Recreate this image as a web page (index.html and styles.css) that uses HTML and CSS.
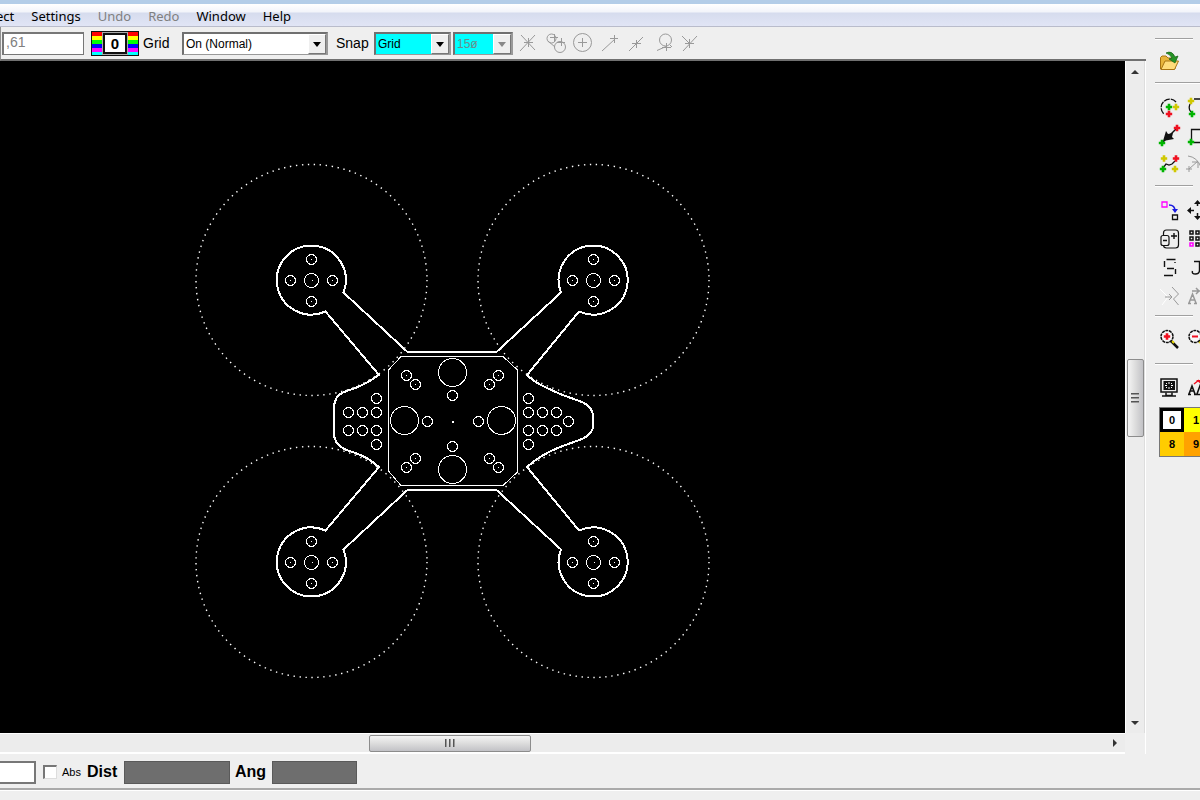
FILE: index.html
```html
<!DOCTYPE html>
<html lang="en">
<head>
<meta charset="utf-8">
<title>CAD drawing</title>
<link rel="stylesheet" href="styles.css">
</head>
<body>
<svg class="defs" aria-hidden="true">
  <defs>
    <path id="plus" d="M-1.300-3.200h2.600v1.900h1.900v2.600h-1.900v1.900h-2.600v-1.900h-1.900v-2.600h1.900z"/>
    <circle id="hole" r="5"/>
    <g id="screw"><circle r="5"/><path d="M-1 0h1"/></g>
    <g id="motor">
      <circle r="7"/><path d="M0 0h1"/>
      <use href="#screw" y="-21"/><use href="#screw" y="21"/>
      <use href="#screw" x="-21"/><use href="#screw" x="21"/>
    </g>
  </defs>
</svg>
<div class="window">
  <nav class="menubar">
    <button class="menu menu-cut">ect</button>
    <button class="menu">Settings</button>
    <button class="menu" disabled>Undo</button>
    <button class="menu" disabled>Redo</button>
    <button class="menu">Window</button>
    <button class="menu">Help</button>
  </nav>

  <div class="workspace">
    <main class="editor">
      <div class="toolbar">
        <input class="coord" type="text" value=",61" aria-label="Coordinate">
        <button class="pen" aria-label="Pen colour 0"><span class="pen-number">0</span></button>
        <label class="tool-label" for="grid">Grid</label>
        <div class="combo combo-grid">
          <select id="grid"><option>On (Normal)</option></select>
          <span class="combo-arrow"></span>
        </div>
        <label class="tool-label snap-label" for="snap">Snap</label>
        <div class="combo combo-snap">
          <select id="snap"><option>Grid</option></select>
          <span class="combo-arrow"></span>
        </div>
        <div class="combo combo-angle">
          <select aria-label="Snap angle" disabled><option>15ø</option></select>
          <span class="combo-arrow"></span>
        </div>
        <div class="snap-tools">
          <button class="tool" aria-label="Intersection"><svg viewBox="518 33 20 20"><path d="M521 35l14 15M535 35l-15 16M524 42.500h9M528.500 38v9"/></svg></button>
          <button class="tool" aria-label="Circle intersection"><svg viewBox="545 33 20 20"><circle cx="551.500" cy="38.500" r="4.500"/><circle cx="560" cy="47" r="5.500"/><path d="M550 37.500h8M554.500 34v8M557 42.500h8M561.500 38v8M548 41l7 6"/></svg></button>
          <button class="tool" aria-label="Centre"><svg viewBox="572 33 20 20"><circle cx="582.500" cy="42.500" r="9"/><path d="M578 42.500h9M582.500 38v9"/></svg></button>
          <button class="tool" aria-label="End point"><svg viewBox="599 33 20 20"><path d="M602 51l13-12M610 38.500h8M614.500 35v8"/></svg></button>
          <button class="tool" aria-label="Mid point"><svg viewBox="626 33 20 20"><path d="M629 51l14-14M632 43.500h9M636.500 40v8"/></svg></button>
          <button class="tool" aria-label="Tangent"><svg viewBox="653 33 20 20"><circle cx="665.500" cy="40" r="6"/><path d="M657 50.500l9-4M662 47.500h9M666.500 43v8M670 45l2 2"/></svg></button>
          <button class="tool" aria-label="Perpendicular"><svg viewBox="680 33 20 20"><path d="M682 36l8 8M697 36l-14 15M685 43.500h9M689.500 39v9"/></svg></button>
        </div>
      </div>

      <div class="view">
        <div class="canvas">
          <svg class="drawing" viewBox="0 61 1125 672" preserveAspectRatio="xMinYMin meet" role="img" aria-label="Quadcopter frame">
            <g class="prop">
              <circle cx="311.500" cy="280" r="115.500"/><circle cx="593.500" cy="280" r="115.500"/>
              <circle cx="311.500" cy="562" r="115.500"/><circle cx="593.500" cy="562" r="115.500"/>
            </g>
            <path class="frame" d="M343.500 292.500L407 351.500H497L561 292.500A34.500 34.500 0 1 1 579 311.500L527 375Q534 382 545 387L560 394L582 402Q593 407 593 416V426Q593 434 582 439L560 447Q540 455 527 467L579 530.500A34.500 34.500 0 1 1 561 549.500L496 489.500H408L343.500 549.500A34.500 34.500 0 1 1 325.500 530.500L379 467Q367 457 358 454L344 449Q334 443 334 434V408Q334 396 344 392L358 387Q369 382 379 375L325.500 311.500A34.500 34.500 0 1 1 343.500 292.500Z"/>
            <path class="thin" d="M401 356.500H503L517.500 370V472L503 485.500H401L388.500 471V370Z"/>
            <g class="thin" transform="translate(.5 .5)">
              <circle cx="452" cy="372" r="14"/><circle cx="404" cy="420" r="14"/>
              <circle cx="501" cy="420" r="14"/><circle cx="452" cy="469" r="14"/>
              <use href="#hole" x="452" y="395"/><use href="#hole" x="427" y="421"/><use href="#hole" x="478" y="421"/><use href="#hole" x="452" y="446"/>
              <use href="#screw" x="406" y="375"/><use href="#screw" x="415" y="384"/><use href="#screw" x="498" y="375"/><use href="#screw" x="489" y="384"/>
              <use href="#screw" x="406" y="467"/><use href="#screw" x="415" y="458"/><use href="#screw" x="498" y="467"/><use href="#screw" x="489" y="458"/>
              <use href="#hole" x="376" y="398"/><use href="#hole" x="348" y="412"/><use href="#hole" x="362" y="412"/><use href="#hole" x="376" y="412"/>
              <use href="#hole" x="348" y="430"/><use href="#hole" x="362" y="430"/><use href="#hole" x="376" y="430"/><use href="#hole" x="376" y="444"/>
              <use href="#hole" x="528" y="398"/><use href="#hole" x="528" y="412"/><use href="#hole" x="542" y="412"/><use href="#hole" x="556" y="412"/>
              <use href="#hole" x="528" y="430"/><use href="#hole" x="542" y="430"/><use href="#hole" x="556" y="430"/><use href="#hole" x="528" y="444"/>
              <use href="#hole" x="568" y="421"/>
              <path class="center" d="M451 421h2"/>
              <use href="#motor" x="311" y="280"/><use href="#motor" x="593" y="280"/>
              <use href="#motor" x="311" y="562"/><use href="#motor" x="593" y="562"/>
            </g>
          </svg>
        </div>
        <div class="scroll scroll-v">
          <svg class="arrow" viewBox="0 0 10 6"><path d="M1 5l4-4 4 4z"/></svg>
          <div class="thumb"><i></i><i></i><i></i></div>
          <svg class="arrow" viewBox="0 0 10 6"><path d="M1 1l4 4 4-4z"/></svg>
        </div>
        <div class="scroll scroll-h">
          <div class="thumb"><i></i><i></i><i></i></div>
          <svg class="arrow" viewBox="0 0 6 10"><path d="M1 1l4 4-4 4z"/></svg>
        </div>
      </div>
    </main>

    <aside class="palette">
      <section class="tools tools-file">
        <button class="tool" aria-label="Open"><svg viewBox="1159 51 20 20"><path d="M1160.500 69V57.500l1.500-1.500h4l2 2h7v11z" fill="#e8b53c" stroke="#a87412"/><path d="M1161 69.500l4-8.500h13.500l-4 8.500z" fill="#ffdc7a" stroke="#a87412"/><path d="M1166 53q6-3 9 4l3-1-3 7-6-4 3-1q-2-4-6-5z" fill="#259325" stroke="#126012" stroke-width=".7"/></svg></button>
      </section>
      <section class="tools tools-draw">
        <button class="tool" aria-label="Circle arc"><svg viewBox="1159 97 20 20"><path d="M1176 102a8.500 8.500 0 1 0-12 12" stroke="#111" stroke-width="1.300" stroke-dasharray="6 1"/><use href="#plus" x="1169" y="107" fill="#00b400"/><use href="#plus" x="1176" y="107" fill="#d0c800"/><use href="#plus" x="1169" y="114" fill="#f01020"/></svg></button>
        <button class="tool" aria-label="Arc"><svg viewBox="1188 97 20 20"><path d="M1194 99h9M1190 104q-2 5 1 8" stroke="#111" stroke-width="1.300"/><use href="#plus" x="1191" y="101" fill="#d0c800"/><use href="#plus" x="1192" y="114" fill="#00b400"/></svg></button>
        <button class="tool" aria-label="Line"><svg viewBox="1159 126 20 20"><path d="M1162 143l14-14" stroke="#111" stroke-width="1.500"/><path d="M1163 141l3-10 2 3 5-1-1 4 2 2z" fill="#111"/><use href="#plus" x="1177" y="128" fill="#f01020"/><use href="#plus" x="1162" y="143" fill="#00b400"/></svg></button>
        <button class="tool" aria-label="Rectangle"><svg viewBox="1188 126 20 20"><path d="M1191.500 142v-12.500h14v13h-12" stroke="#111" stroke-width="1.300"/><use href="#plus" x="1191" y="142" fill="#00b400"/></svg></button>
        <button class="tool" aria-label="Spline"><svg viewBox="1159 155 20 20"><path d="M1163 168l3-4 3 1 3-1 3-3" stroke="#111" stroke-width="1.300"/><use href="#plus" x="1164" y="158.500" fill="#d0c800"/><use href="#plus" x="1176" y="158.500" fill="#f01020"/><use href="#plus" x="1163" y="169" fill="#00b400"/><use href="#plus" x="1175" y="169" fill="#d0c800"/></svg></button>
        <button class="tool" aria-label="Tangent arc"><svg viewBox="1188 155 20 20"><path d="M1188 156q9 1 13 11M1189 169l9-8M1192 162h6v6M1186 169h6M1189 166v6"/></svg></button>
      </section>
      <section class="tools tools-edit">
        <button class="tool" aria-label="Move"><svg viewBox="1159 200 20 20"><path d="M1162 202h5v5h-5z" stroke="#f0f" stroke-width="1.300"/><path d="M1169 205q6 0 6 6" stroke="#1818e0" stroke-width="1.500"/><path d="M1172 209h6l-3 4z" fill="#1818e0"/><path d="M1172.500 215h5v4.500h-5z" stroke="#111" stroke-width="1.300"/></svg></button>
        <button class="tool" aria-label="Stretch"><svg viewBox="1188 200 20 20"><path d="M1197.500 203v3M1197.500 213v4M1191 210.500h3M1200 210.500h4" stroke="#111" stroke-width="1.500"/><path d="M1194 204l3.500-4 3.500 4zM1194 216l3.500 4 3.500-4zM1191 207v7l-4-3.500z" fill="#111"/></svg></button>
        <button class="tool" aria-label="Scale"><svg viewBox="1159 229 20 20"><rect x="1163.500" y="230" width="15" height="18" rx="3" stroke="#111" stroke-width="1.200"/><rect x="1161" y="235.500" width="8" height="10" rx="2" fill="#efefef" stroke="#111" stroke-width="1.200"/><path d="M1163 240.500h4M1171 236h6M1174 233v6" stroke="#111" stroke-width="1.400"/></svg></button>
        <button class="tool" aria-label="Array"><svg viewBox="1188 229 20 20"><path d="M1190 231h3v3h-3zM1196 231h3v3h-3zM1190 237h3v3h-3zM1196 237h3v3h-3zM1196 243h3v3h-3z" stroke="#111" stroke-width="1.500"/><path d="M1190 243h3v3h-3z" stroke="#f0f" stroke-width="1.500"/></svg></button>
        <button class="tool" aria-label="Break curve"><svg viewBox="1159 257 20 20"><path d="M1166.500 258.500h9M1164.500 260v6M1167 267.500h7M1175.500 268v5M1164 274.500h9M1175 261v1" stroke="#111" stroke-width="1.400"/></svg></button>
        <button class="tool" aria-label="Fillet"><svg viewBox="1188 257 20 20"><path d="M1194 260.500h6M1199.500 260v9q0 4-4 4t-3-3" stroke="#111" stroke-width="1.400"/></svg></button>
        <button class="tool" aria-label="Trim"><svg viewBox="1159 286 20 20"><path d="M1160 288l8 8-6 8" stroke="#fff"/><path d="M1172 286l6.500 7-5 5 5 6M1165 296h7M1169 293l3 3-3 3"/></svg></button>
        <button class="tool" aria-label="Edit text"><svg viewBox="1188 286 20 20"><path d="M1189 302l3.500-9 3.500 9M1190.500 299h4M1188 302.500h3M1194 302.500h3M1192 290h8M1196 287l3 3-3 3" stroke-width="1.500"/></svg></button>
      </section>
      <section class="tools tools-zoom">
        <button class="tool" aria-label="Zoom in"><svg viewBox="1159 329 20 20"><path d="M1171 341l7 7" stroke="#111" stroke-width="2.500"/><path d="M1172 341l2 2" stroke="#e8d800" stroke-width="2"/><circle cx="1167" cy="336.500" r="6" fill="#f8f8f8" stroke="#111" stroke-width="1.500" stroke-dasharray="3 .7"/><use href="#plus" x="1167" y="336.500" fill="#f01020"/></svg></button>
        <button class="tool" aria-label="Zoom out"><svg viewBox="1188 329 20 20"><path d="M1199 341l7 7" stroke="#e8d800" stroke-width="2.500"/><circle cx="1195" cy="336.500" r="6" fill="#f8f8f8" stroke="#111" stroke-width="1.500" stroke-dasharray="3 .7"/><path d="M1192 336.500h6" stroke="#f01020" stroke-width="2"/></svg></button>
      </section>
      <section class="tools tools-show">
        <button class="tool" aria-label="Display"><svg viewBox="1159 378 20 20"><path d="M1161 379h16v13h-16z" fill="#eee" stroke="#111" stroke-width="1.500"/><path d="M1163.500 381h11.500v9h-11.500z" fill="#111"/><path d="M1169 382v2M1169 387v2M1165 385.500h2M1171 385.500h2M1166 383l1 1M1172 383l-1 1M1166 388l1-1M1172 388l-1-1" stroke="#fff"/><path d="M1166 392.500v3h6v-3M1162 396h14" stroke="#111" stroke-width="1.500"/></svg></button>
        <button class="tool" aria-label="Text size"><svg viewBox="1188 378 20 20"><path d="M1189 394l3-8 3 8M1190 391h4M1188 394.500h3M1194 394.500h3M1197 394l4-11M1196 394.500h4" stroke="#111" stroke-width="1.600"/><path d="M1194 384l5-4" stroke="#f01020" stroke-width="1.500"/><path d="M1196 380h6v5z" fill="#f01020"/></svg></button>
      </section>
      <div class="swatches">
        <button class="swatch swatch-0">0</button>
        <button class="swatch swatch-1">1</button>
        <button class="swatch swatch-8">8</button>
        <button class="swatch swatch-9">9</button>
      </div>
    </aside>
  </div>

  <footer class="entry">
    <input class="field" type="text" aria-label="Value">
    <input class="check" type="checkbox" id="abs">
    <label class="abs-label" for="abs">Abs</label>
    <label class="entry-label" for="dist">Dist</label>
    <input class="readout readout-dist" type="text" id="dist" readonly>
    <label class="entry-label" for="ang">Ang</label>
    <input class="readout readout-ang" type="text" id="ang" readonly>
  </footer>
  <div class="statusline"></div>
</div>
</body>
</html>
```
FILE: styles.css
```css
* { box-sizing: border-box; }

body {
  margin: 0;
  background: #efefef;
  color: #000;
  font-family: "Liberation Sans", Arial, sans-serif;
  overflow: hidden;
}

button, input, select { font-family: inherit; margin: 0; padding: 0; border-radius: 0; }
button { border: 0; background: none; color: inherit; }
.defs { position: absolute; width: 0; height: 0; }

.window { display: flex; flex-direction: column; height: 100vh; }

/* Menu */
.menubar {
  display: flex;
  gap: 17px;
  height: 27px;
  border-top: 4px solid #b3cde8;
  border-bottom: 1px solid #b9bccb;
  background: linear-gradient(#fff 0, #f2f4fa 8px, #d6dcee 9px, #e1e5f5 100%);
}
.menu { font: 13px/22px "Noto Sans", "Open Sans", sans-serif; height: 22px; padding-top: 1px; }
.menu:disabled { color: #808080; }
.menu-cut { margin-left: -4px; }

.workspace { display: flex; flex: 1; min-height: 0; }
.editor { display: flex; flex-direction: column; flex: 1; min-width: 0; }

/* Toolbar */
.toolbar {
  display: flex;
  align-items: center;
  height: 34px;
  border-bottom: 2px solid #707070;
  border-left: 1px solid #909090;
  width: 100%;
}
.coord {
  width: 82px;
  height: 23px;
  margin: 0 7px 0 1px;
  padding: 0 2px 4px;
  border: 2px solid #777;
  border-right-width: 1px;
  border-bottom-width: 1px;
  background: #fff;
  color: #808080;
  font-size: 14px;
}
.pen {
  display: flex;
  align-items: center;
  justify-content: center;
  width: 48px;
  height: 25px;
  margin-right: 4px;
  border: 1px solid #111;
  background: linear-gradient(#f00 0 4px, #ff0 4px 8px, #0f0 8px 12px, #00f 12px 16px, #f0f 16px 20px, #0ff 20px);
}
.pen-number {
  width: 24px;
  height: 21px;
  border: 2px solid #111;
  outline: 1px solid #aaa;
  background: #fff;
  font: bold 15px/17px "Liberation Sans", sans-serif;
}
.tool-label { width: 39px; font-size: 14px; }
.snap-label { width: 38px; margin-left: 8px; }
.combo { position: relative; height: 23px; border: 2px solid #707070; border-right-color: #999; border-bottom: 1px solid #999; }
.combo select {
  appearance: none;
  display: block;
  width: 100%;
  height: 100%;
  padding: 0 20px 0 2px;
  border: 0;
  background: #fff;
  color: #000;
  font-size: 12px;
  opacity: 1;
}
.combo-grid { width: 146px; }
.combo-snap { width: 77px; margin-right: 2px; }
.combo-angle { width: 60px; margin-right: 5px; }
.combo-snap select, .combo-angle select { background: #0ff; }
.combo-angle select { color: #6a8c8c; }
.combo-arrow {
  position: absolute;
  top: 0;
  right: 0;
  bottom: 0;
  width: 18px;
  border: 1px solid #fff;
  border-right-color: #777;
  border-bottom-color: #777;
  background: #efefef;
  pointer-events: none;
}
.combo-arrow::after {
  content: "";
  position: absolute;
  left: 4px;
  top: 7px;
  border: 4px solid transparent;
  border-top: 5px solid #000;
  border-bottom: 0;
}
.combo-angle .combo-arrow::after { border-top-color: #888; }
.snap-tools { display: flex; gap: 7px; }

.tool { display: block; width: 20px; height: 20px; }
.tool svg { display: block; width: 20px; height: 20px; fill: none; stroke: #999; overflow: visible; }
.tool use { stroke: none; }
.palette .tool path[fill]:not([stroke]) { stroke: none; }

/* Drawing area */
.view { display: grid; grid-template: minmax(0, 1fr) 21px / minmax(0, 1fr) 20px; flex: 1; min-height: 0; border-right: 1px solid #fff; }
.canvas { background: #000; overflow: hidden; }
.drawing { display: block; width: 100%; height: 100%; fill: none; stroke: #fff; shape-rendering: crispEdges; }
.frame { stroke-width: 2; }
.thin { stroke-width: 1; }
.center { stroke-width: 2; }
.prop { stroke-width: 1.4; stroke-dasharray: 1.4 4.6; shape-rendering: auto; }

.scroll { display: flex; align-items: center; background: #ececec; }
.scroll-v { flex-direction: column; padding: 8px 1px 7px; border-left: 1px solid #fff; border-right: 1px solid #ddd; }
.scroll-h { padding: 0 7px 0 0; border-top: 1px solid #fff; border-bottom: 2px solid #fff; }
.scroll-v .arrow { width: 10px; height: 6px; }
.scroll-h .arrow { width: 6px; height: 10px; margin-left: auto; }
.arrow { fill: #333; }
.thumb { display: flex; align-items: center; justify-content: center; gap: 2px; border: 1px solid #8c8c8c; border-radius: 2px; }
.thumb i { background: #555; }
.scroll-v .thumb { flex-direction: column; width: 17px; height: 78px; margin: auto 0; background: linear-gradient(90deg, #f4f4f4, #dcdcdc 50%, #c2c2c6); }
.scroll-v .thumb i { width: 8px; height: 2px; border-bottom: 1px solid #999; }
.scroll-h .thumb { width: 162px; height: 17px; margin-left: 33%; background: linear-gradient(#f4f4f4, #dcdcdc 50%, #c2c2c6); }
.scroll-h .thumb i { width: 2px; height: 8px; border-right: 1px solid #999; }

/* Tool palette */
.palette { flex: 0 0 54px; padding: 11px 0 0 9px; overflow: hidden; }
.tools {
  display: grid;
  grid-template-columns: 20px 20px;
  grid-auto-rows: 20px;
  align-content: start;
  gap: 9px;
  width: 38px;
  padding-left: 4px;
  border-top: 1px solid #a0a0a0;
  box-shadow: inset 0 1px #fff;
}
.tools-file { height: 44px; padding-top: 12px; }
.tools-draw { width: 45px; height: 103px; padding-top: 14px; }
.tools-edit { height: 130px; padding-top: 14px; }
.tools-zoom { height: 48px; padding-top: 13px; }
.tools-show { height: 44px; padding-top: 14px; }
.swatches {
  display: grid;
  grid-template-columns: 24px 24px;
  grid-auto-rows: 24px;
  width: 50px;
  margin-left: 4px;
  border: 1px solid #777;
}
.swatch { font: bold 11px/14px "Liberation Sans", sans-serif; }
.swatch-0 { border: 3px solid #000; background: #fff; }
.swatch-1 { background: #ff0; }
.swatch-8 { background: #fc0; }
.swatch-9 { background: #ffa200; }

/* Entry bar */
.entry {
  display: flex;
  align-items: center;
  height: 36px;
  padding-top: 2px;
  border-bottom: 2px solid #aaa;
}
.field { width: 36px; height: 23px; border: 2px solid #777; border-left: 0; background: #fff; }
.check {
  appearance: none;
  width: 14px;
  height: 14px;
  margin: 0 5px 0 7px;
  border: 2px solid #777;
  border-right: 1px solid #ddd;
  border-bottom: 1px solid #ddd;
  background: #fff;
}
.abs-label { width: 25px; font-size: 11px; }
.entry-label { width: 37px; font-size: 16px; font-weight: bold; }
.readout { height: 23px; border: 1px solid #5a5a5a; background: #6e6e6e; color: #fff; }
.readout-dist { width: 106px; margin-right: 5px; }
.readout-ang { width: 85px; }
.statusline { height: 10px; border-top: 1px solid #fff; }
```
